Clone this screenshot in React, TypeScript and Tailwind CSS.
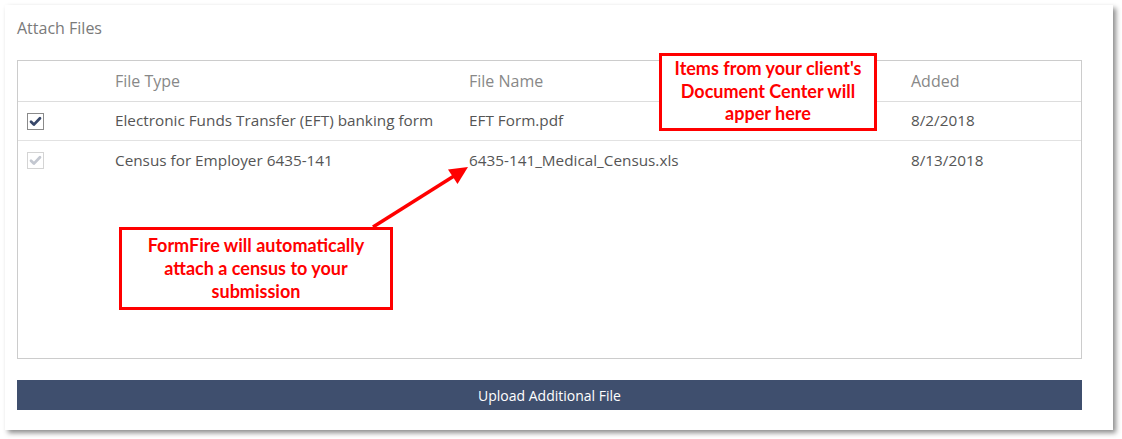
import React from 'react';

const rows = [
  { type: 'Electronic Funds Transfer (EFT) banking form', name: 'EFT Form.pdf', added: '8/2/2018', disabled: false },
  { type: 'Census for Employer 6435-141', name: '6435-141_Medical_Census.xls', added: '8/13/2018', disabled: true },
];

const Check = ({ disabled }: { disabled: boolean }) => (
  <div
    className={
      'w-[17px] h-[17px] border bg-white flex items-center justify-center ' +
      (disabled ? 'border-[#d4d4d4]' : 'border-[#8a8a8a]')
    }
  >
    <svg viewBox="0 0 16 16" className="w-[13px] h-[13px]">
      <path
        d="M2.5 8.4 L6 11.8 L13.5 4"
        fill="none"
        stroke={disabled ? '#c3c7d0' : '#37476a'}
        strokeWidth="3.4"
        strokeLinecap="round"
        strokeLinejoin="round"
      />
    </svg>
  </div>
);

const callout = 'absolute border-[3px] border-[#ff0000] bg-white text-[#ff0000] font-bold text-center text-[18px] flex items-center justify-center';

export default function App() {
  return (
    <div className="relative w-[1122px] h-[439px] bg-white font-['Open_Sans',sans-serif] overflow-hidden">
      <div className="ml-[5px] mt-[5px] w-[1108px] h-[425px] bg-white shadow-[3px_3px_5px_rgba(0,0,0,0.45)] pl-[12px] pr-[31px] flex flex-col">
        <div className="pt-[12px] text-[16px] leading-[22px] text-[#7a7a7a]">Attach Files</div>
        <div className="mt-[21px] h-[299px] border border-[#cccccc]">
          <div className="grid grid-cols-[87px_354px_442px_1fr] h-[41px] items-center border-b border-[#dddddd] text-[16px] text-[#888888]">
            <div />
            <div className="pl-[10px]">File Type</div>
            <div className="pl-[10px]">File Name</div>
            <div className="pl-[10px]">Added</div>
          </div>
          {rows.map((r, i) => (
            <div
              key={r.name}
              className={
                'grid grid-cols-[87px_354px_442px_1fr] h-[39px] items-center text-[15.3px] leading-[20px] text-[#555555] ' +
                (i === 0 ? 'border-b border-[#e2e2e2]' : '')
              }
            >
              <div className="pl-[9px]">
                <Check disabled={r.disabled} />
              </div>
              <div className="pl-[10px] -mt-[2px]">{r.type}</div>
              <div className="pl-[10px] -mt-[2px]">{r.name}</div>
              <div className="pl-[10px] -mt-[2px]">{r.added}</div>
            </div>
          ))}
        </div>
        <button className="mt-[21px] h-[30px] w-full bg-[#3f4f6e] text-white text-[14px]">Upload Additional File</button>
      </div>

      {/* annotations */}
      <div className={callout + " left-[659px] top-[53px] w-[218px] h-[78px] leading-[22.5px] font-['Lato',sans-serif]"}>
        <div className="-mt-[2px]">
          Items from your client's
          <br />
          Document Center will
          <br />
          apper here
        </div>
      </div>
      <div className={callout + " left-[119px] top-[227px] w-[274px] h-[83px] leading-[23px] font-['Lato',sans-serif]"}>
        <div className="-mt-[1px]">
          FormFire will automatically
          <br />
          attach a census to your
          <br />
          submission
        </div>
      </div>
      <svg className="absolute left-0 top-0 pointer-events-none" width="1122" height="439">
        <line x1="373" y1="227" x2="454" y2="176" stroke="#ff0000" strokeWidth="3.5" />
        <polygon points="468,167 457.5,184 448,169.5" fill="#ff0000" />
      </svg>
    </div>
  );
}
